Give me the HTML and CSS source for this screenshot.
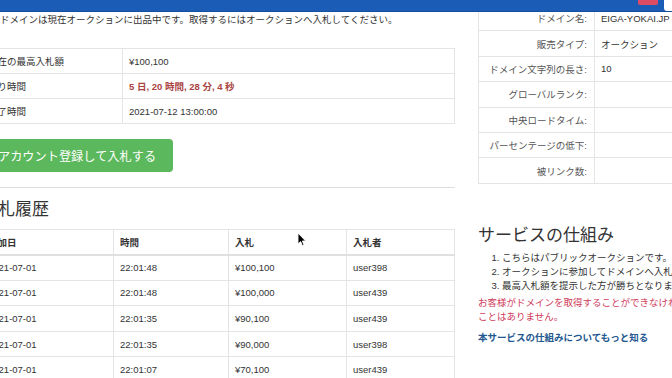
FILE: index.html
```html
<!DOCTYPE html>
<html lang="ja">
<head>
    <meta charset="UTF-8">
    <meta name="viewport" content="width=device-width, initial-scale=1.0">
    <title>EIGA-YOKAI.JP オークション</title>
    <link rel="stylesheet" href="styles.css">
</head>
<body>
    <div class="topbar">
        <span class="topbar_btn topbar_red"></span>
        <span class="topbar_btn topbar_white"></span>
    </div>
    <div class="page">
        <div class="main">
            <p class="notice">このドメインは現在オークションに出品中です。取得するにはオークションへ入札してください。</p>
            <table class="info">
                <tr><td class="info_label">現在の最高入札額</td><td>¥100,100</td></tr>
                <tr><td class="info_label">残り時間</td><td class="countdown">5 日, 20 時間, 28 分, 4 秒</td></tr>
                <tr><td class="info_label">終了時間</td><td>2021-07-12 13:00:00</td></tr>
            </table>
            <button class="bid_button">アカウント登録して入札する</button>
            <hr>
            <h3>入札履歴</h3>
            <table class="bids">
                <colgroup><col class="col_date"><col class="col_time"><col class="col_bid"><col></colgroup>
                <tr><th>追加日</th><th>時間</th><th>入札</th><th>入札者</th></tr>
                <tr><td>2021-07-01</td><td>22:01:48</td><td>¥100,100</td><td>user398</td></tr>
                <tr><td>2021-07-01</td><td>22:01:48</td><td>¥100,000</td><td>user439</td></tr>
                <tr><td>2021-07-01</td><td>22:01:35</td><td>¥90,100</td><td>user439</td></tr>
                <tr><td>2021-07-01</td><td>22:01:35</td><td>¥90,000</td><td>user398</td></tr>
                <tr><td>2021-07-01</td><td>22:01:07</td><td>¥70,100</td><td>user439</td></tr>
            </table>
        </div>
        <div class="side">
            <table class="details">
                <tr><td class="details_label">ドメイン名:</td><td>EIGA-YOKAI.JP</td></tr>
                <tr><td class="details_label">販売タイプ:</td><td>オークション</td></tr>
                <tr><td class="details_label">ドメイン文字列の長さ:</td><td>10</td></tr>
                <tr><td class="details_label">グローバルランク:</td><td></td></tr>
                <tr><td class="details_label">中央ロードタイム:</td><td></td></tr>
                <tr><td class="details_label">パーセンテージの低下:</td><td></td></tr>
                <tr><td class="details_label">被リンク数:</td><td></td></tr>
            </table>
            <h3 class="side_title">サービスの仕組み</h3>
            <ol class="steps">
                <li>こちらはパブリックオークションです。</li>
                <li>オークションに参加してドメインへ入札してください。</li>
                <li>最高入札額を提示した方が勝ちとなります。</li>
            </ol>
            <p class="warning">お客様がドメインを取得することができなければ、料金が請求されることはありません。</p>
            <a class="more" href="#">本サービスの仕組みについてもっと知る</a>
        </div>
    </div>
    <svg class="cursor" width="10" height="15" viewBox="0 0 10 15">
        <path d="M1 1 L1 12 L3.6 9.6 L5.4 13.6 L7 12.9 L5.3 9 L8.6 9 Z" fill="#000" stroke="#fff" stroke-width="0.9"/>
    </svg>
</body>
</html>
```

FILE: styles.css
```css
* {
    box-sizing: border-box;
}
body {
    margin: 0;
    overflow: hidden;
    font-family: "Liberation Sans", "Noto Sans CJK JP", sans-serif;
    font-size: 9.5px;
    color: #333;
    background-color: #fff;
}
.topbar {
    position: fixed;
    top: 0;
    left: 0;
    right: 0;
    height: 12px;
    background-color: #1b5db6;
    border-bottom: 1px solid #164f9e;
    display: flex;
    justify-content: flex-end;
    align-items: flex-start;
    gap: 6px;
    z-index: 2;
}
.topbar_btn {
    display: block;
}
.topbar_red {
    width: 20px;
    height: 5px;
    background-color: #dc4c64;
    border-radius: 0 0 2px 2px;
}
.topbar_white {
    width: 8px;
    height: 11px;
    background-color: #fff;
    border-bottom-left-radius: 3px;
}
.page {
    display: flex;
    gap: 23px;
    margin-left: -19px;
    padding-top: 5px;
}
.main {
    width: 474px;
    flex: none;
}
.side {
    width: 296px;
    flex: none;
}
.notice {
    margin: 8px 0 21px;
    line-height: 14px;
    white-space: nowrap;
}
table {
    border-collapse: collapse;
    width: 100%;
}
td, th {
    border: 1px solid #e4e4e4;
    padding: 0 6px;
    height: 25px;
    text-align: left;
    vertical-align: middle;
    white-space: nowrap;
}
.info_label {
    width: 141px;
}
.countdown {
    color: #a94442;
    font-weight: bold;
}
.bid_button {
    display: block;
    height: 33px;
    margin: 15px 0 0;
    padding: 0 17px;
    border: none;
    border-radius: 4px;
    background-color: #5cb85c;
    color: #fff;
    font-family: inherit;
    font-size: 12.2px;
}
hr {
    border: 0;
    border-top: 1px solid #ddd;
    margin: 15px 0 12px;
}
h3 {
    font-size: 17px;
    font-weight: normal;
    line-height: 20px;
    margin: 0 0 9px;
}
.bids {
    table-layout: fixed;
}
.col_date {
    width: 132px;
}
.col_time {
    width: 115px;
}
.col_bid {
    width: 118px;
}
.bids th {
    font-weight: bold;
    border-bottom: 2px solid #e0e0e0;
}
.bids td {
    height: 25.6px;
}
.details td {
    height: 25.4px;
}
.details_label {
    width: 116px;
    text-align: right;
    padding-right: 7px;
    color: #555;
}
.side_title {
    margin: 42px 0 5px;
}
.steps {
    margin: 0;
    padding-left: 24px;
    line-height: 14px;
}
.warning {
    margin: 3px 0 7px;
    line-height: 14px;
    color: #cf3b5a;
}
.more {
    display: block;
    line-height: 14px;
    color: #23578f;
    font-weight: bold;
    text-decoration: none;
}
.cursor {
    position: absolute;
    left: 297px;
    top: 232px;
}
```
